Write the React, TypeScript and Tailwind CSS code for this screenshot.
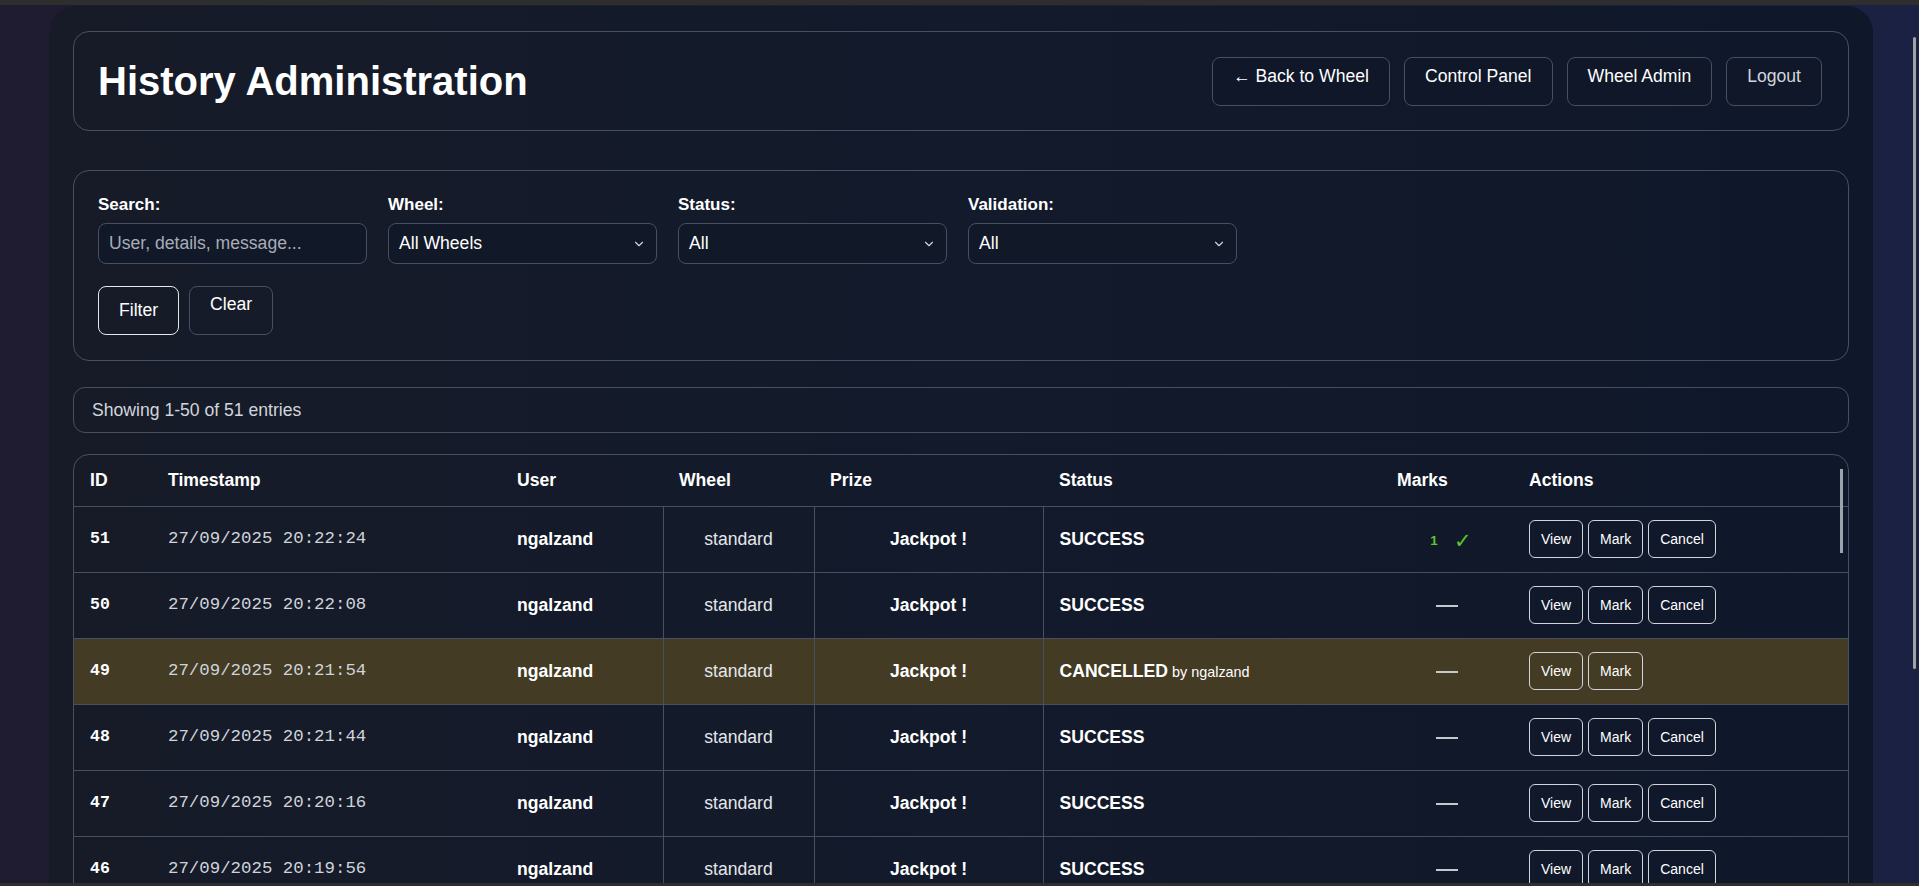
import { ChevronDown } from "lucide-react";

type Entry = {
	id: number;
	ts: string;
	status: "SUCCESS" | "CANCELLED";
	by?: string;
	marks: number;
};

const entries: Entry[] = [
	{ id: 51, ts: "27/09/2025 20:22:24", status: "SUCCESS", marks: 1 },
	{ id: 50, ts: "27/09/2025 20:22:08", status: "SUCCESS", marks: 0 },
	{ id: 49, ts: "27/09/2025 20:21:54", status: "CANCELLED", by: "ngalzand", marks: 0 },
	{ id: 48, ts: "27/09/2025 20:21:44", status: "SUCCESS", marks: 0 },
	{ id: 47, ts: "27/09/2025 20:20:16", status: "SUCCESS", marks: 0 },
	{ id: 46, ts: "27/09/2025 20:19:56", status: "SUCCESS", marks: 0 },
	{ id: 45, ts: "27/09/2025 20:19:31", status: "SUCCESS", marks: 0 },
];

function HeaderButton({ children, dim }: { children: React.ReactNode; dim?: boolean }) {
	return (
		<button
			className={
				"h-[49px] px-5 pt-[8px] text-[17.6px] leading-5 rounded-lg border border-[#465062] bg-[#0f1729] flex items-start " +
				(dim ? "text-[#d1d5db]" : "text-white")
			}
		>
			{children}
		</button>
	);
}

function Field({ label, children }: { label: string; children: React.ReactNode }) {
	return (
		<div>
			<div className="text-[17px] font-bold leading-5 mb-2 text-white">{label}</div>
			{children}
		</div>
	);
}

function SelectBox({ value }: { value: string }) {
	return (
		<div className="h-[41px] rounded-lg border border-[#465062] bg-[#111827] pl-[10px] pr-[10px] flex items-center justify-between text-[17.6px] text-white">
			<span>{value}</span>
			<ChevronDown className="w-[14px] h-[14px] text-[#d1d5db]" strokeWidth={2} />
		</div>
	);
}

function ActionButton({ children }: { children: React.ReactNode }) {
	return (
		<button className="h-[38px] px-[11px] text-[14px] leading-5 rounded-md border border-[#d1d5db] text-white bg-transparent">
			{children}
		</button>
	);
}

export default function App() {
	return (
		<div className="relative h-[886px] overflow-hidden bg-gradient-to-r from-[#1f1b30] to-[#1b2142] border-t-[5px] border-b-[3px] border-[#2e2e2e] font-['Liberation_Sans',Arial,sans-serif] text-white">
			{/* page scrollbar */}
			<div className="absolute right-[3px] top-[32px] h-[632px] w-[3px] rounded-full bg-[#a3a3a3]" />

			<div className="ml-[49px] w-[1824px] mt-px rounded-t-[26px] bg-gradient-to-r from-[#171b28] via-[#121a2b] to-[#0f172a] px-6 pt-[25px] pb-10">
				{/* header */}
				<div className="h-[100px] rounded-2xl border border-[#465062] pl-6 pr-[26px] flex items-center justify-between">
					<h1 className="text-[40px] font-bold text-white">History Administration</h1>
					<div className="flex gap-[14px] h-[49px]">
						<HeaderButton>← Back to Wheel</HeaderButton>
						<HeaderButton>Control Panel</HeaderButton>
						<HeaderButton>Wheel Admin</HeaderButton>
						<HeaderButton dim>Logout</HeaderButton>
					</div>
				</div>

				{/* filters */}
				<div className="mt-[39px] h-[191px] rounded-2xl border border-[#465062] px-6 pt-6">
					<div className="grid grid-cols-[repeat(4,269px)] gap-x-[21px]">
						<Field label="Search:">
							<div className="h-[41px] rounded-lg border border-[#465062] bg-[#111827] px-[10px] flex items-center text-[17.6px] text-[#a7adb8]">
								User, details, message...
							</div>
						</Field>
						<Field label="Wheel:">
							<SelectBox value="All Wheels" />
						</Field>
						<Field label="Status:">
							<SelectBox value="All" />
						</Field>
						<Field label="Validation:">
							<SelectBox value="All" />
						</Field>
					</div>
					<div className="mt-[22px] flex gap-[10px]">
						<button className="h-[49px] px-5 text-[17.6px] rounded-lg border border-[#e5e7eb] text-white">
							Filter
						</button>
						<button className="h-[49px] px-5 pt-[7px] text-[17.6px] leading-5 rounded-lg border border-[#465062] text-white flex items-start">
							Clear
						</button>
					</div>
				</div>

				{/* info */}
				<div className="mt-[26px] h-[46px] rounded-xl border border-[#465062] px-[18px] flex items-center text-[17.6px] text-[#d1d5db]">
					Showing 1-50 of 51 entries
				</div>

				{/* table */}
				<div className="relative mt-[21px] rounded-2xl border border-[#465062] overflow-hidden">
					<div className="absolute right-[5px] top-[14px] h-[84px] w-[3px] bg-[#9ca3af]" />
					<table className="w-full table-fixed border-collapse text-[17.6px]">
						<colgroup>
							<col className="w-[78px]" />
							<col className="w-[349px]" />
							<col className="w-[162px]" />
							<col className="w-[151px]" />
							<col className="w-[229px]" />
							<col className="w-[338px]" />
							<col className="w-[132px]" />
							<col />
						</colgroup>
						<thead>
							<tr className="h-[51px] text-left">
								{["ID", "Timestamp", "User", "Wheel", "Prize", "Status", "Marks", "Actions"].map((h) => (
									<th key={h} className="px-4 font-bold text-white">
										{h}
									</th>
								))}
							</tr>
						</thead>
						<tbody>
							{entries.map((e) => (
								<tr
									key={e.id}
									className={
										"h-[66px] border-t border-[#465062] " +
										(e.status === "CANCELLED" ? "bg-[#433b24]" : "")
									}
								>
									<td className="px-4 font-['Liberation_Mono','Courier_New',monospace] font-bold text-[16.5px] text-white">
										{e.id}
									</td>
									<td className="px-4 font-['Liberation_Mono','Courier_New',monospace] text-[17.4px] text-[#cfd4db]">
										{e.ts}
									</td>
									<td className="px-4 font-bold text-white">ngalzand</td>
									<td className="px-4 text-center text-[#e5e7eb] border-x border-[#465062]">standard</td>
									<td className="px-4 text-center font-bold text-white border-r border-[#465062]">Jackpot !</td>
									<td className="px-4">
										<span className="font-bold text-white">{e.status}</span>
										{e.by && <span className="text-[14.4px] text-white"> by {e.by}</span>}
									</td>
									<td className="px-4 text-center">
										{e.marks > 0 ? (
											<span className="inline-flex items-center gap-[16px] pl-[8px] text-[#58c72a]">
												<span className="text-[13.5px] font-bold">{e.marks}</span>
												<span className="text-[21px] leading-none">✓</span>
											</span>
										) : (
											<span className="inline-block align-middle w-[22px] h-[1.5px] bg-[#c4c9d1]" />
										)}
									</td>
									<td className="px-4">
										<div className="flex gap-[5px]">
											<ActionButton>View</ActionButton>
											<ActionButton>Mark</ActionButton>
											{e.status !== "CANCELLED" && <ActionButton>Cancel</ActionButton>}
										</div>
									</td>
								</tr>
							))}
						</tbody>
					</table>
				</div>
			</div>
		</div>
	);
}
